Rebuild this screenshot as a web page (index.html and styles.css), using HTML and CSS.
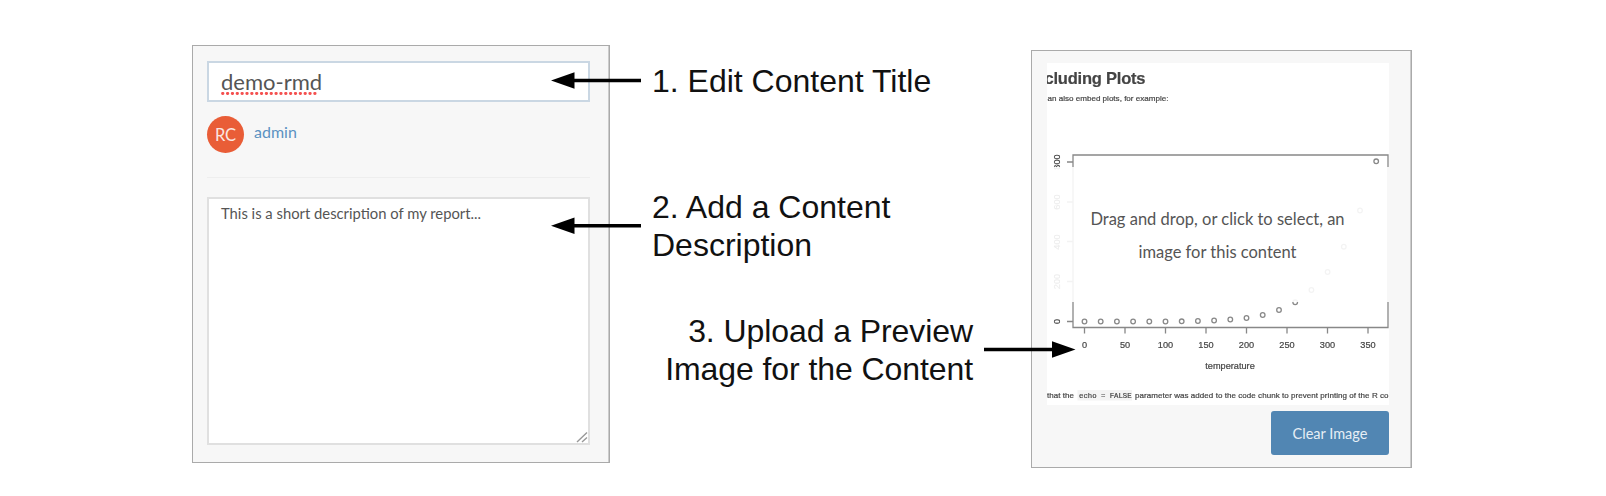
FILE: index.html
```
<!DOCTYPE html>
<html lang="en">
<head>
<meta charset="utf-8">
<title>Content settings</title>
<link rel="stylesheet" href="styles.css">
</head>
<body>
<main class="figure">
  <section class="panel panel-info">
    <div class="title-field"><span class="title-text">demo-rmd</span>
      <svg class="squiggle" width="99" height="3" viewBox="0 0 99 3"><path d="M1.5 1.5H98" stroke="#f4504f" stroke-width="2.8" stroke-linecap="round" stroke-dasharray="0.5 4.35"/></svg>
    </div>
    <div class="owner"><span class="avatar">RC</span><a class="owner-name">admin</a></div>
    <div class="divider"></div>
    <div class="description">This is a short description of my report...
      <svg class="grip" width="12" height="12" viewBox="0 0 12 12"><path d="M1 11L11 1.500M6 11L11 6.500" stroke="#999" stroke-width="1.400" fill="none"/></svg>
    </div>
  </section>

  <section class="labels">
    <p class="label label-one">1. Edit Content Title</p>
    <p class="label label-two">2. Add a Content<br>Description</p>
    <p class="label label-three">3. Upload a Preview<br>Image for the Content</p>
  </section>

  <section class="panel panel-image">
    <div class="preview">
      <svg class="plot" width="342" height="342" viewBox="1047 63 342 342">
        <g class="ink">
          <text x="1145.500" y="83.700" font-size="16.500" font-weight="bold" text-anchor="end" textLength="101">cluding Plots</text>
          <text x="1168.500" y="101.300" font-size="8.070" text-anchor="end">an also embed plots, for example:</text>
          <g font-size="9.200" text-anchor="middle">
            <text x="1084.500" y="347.500">0</text><text x="1125" y="347.500">50</text><text x="1165.500" y="347.500">100</text><text x="1206" y="347.500">150</text><text x="1246.500" y="347.500">200</text><text x="1287" y="347.500">250</text><text x="1327.500" y="347.500">300</text><text x="1368" y="347.500">350</text>
            <text x="1230" y="369.200">temperature</text>
            <text transform="translate(1060 162) rotate(-90)">800</text>
            <text transform="translate(1060 202) rotate(-90)">600</text>
            <text transform="translate(1060 242) rotate(-90)">400</text>
            <text transform="translate(1060 281.500) rotate(-90)">200</text>
            <text transform="translate(1060 321.500) rotate(-90)">0</text>
          </g>
          <text x="1047" y="398" font-size="8" textLength="27">that the</text>
          <rect class="code-box" x="1077.500" y="390" width="54.500" height="10.500"/>
          <text class="code" x="1079" y="398" font-size="7.300">echo = FALSE</text>
          <text x="1135" y="398" font-size="8" textLength="253.500">parameter was added to the code chunk to prevent printing of the R co</text>
        </g>
        <g fill="none" stroke="#888" stroke-width="1.300">
          <path d="M1073 155V327.500H1388V155Z"/>
          <path d="M1067 162h6M1067 202h6M1067 241.500h6M1067 281.500h6M1067 321.500h6M1084.500 327.500v6M1125 327.500v6M1165.500 327.500v6M1206 327.500v6M1246.500 327.500v6M1287 327.500v6M1327.500 327.500v6M1368 327.500v6"/>
          <circle cx="1084.500" cy="321.500" r="2.300"/><circle cx="1100.700" cy="321.500" r="2.300"/><circle cx="1116.900" cy="321.500" r="2.300"/><circle cx="1133.100" cy="321.500" r="2.300"/><circle cx="1149.300" cy="321.500" r="2.300"/><circle cx="1165.500" cy="321.500" r="2.300"/><circle cx="1181.700" cy="321.300" r="2.300"/><circle cx="1197.900" cy="321" r="2.300"/><circle cx="1214.100" cy="320.500" r="2.300"/><circle cx="1230.300" cy="319.500" r="2.300"/><circle cx="1246.500" cy="318" r="2.300"/><circle cx="1262.700" cy="315" r="2.300"/><circle cx="1279" cy="310" r="2.300"/><circle cx="1295.200" cy="302.300" r="2.300"/><circle cx="1311.400" cy="290" r="2.300"/><circle cx="1327.600" cy="272" r="2.300"/><circle cx="1343.800" cy="246.700" r="2.300"/><circle cx="1360" cy="210.500" r="2.300"/><circle cx="1376.200" cy="161.300" r="2.300"/>
        </g>
      </svg>
      <div class="drop-hint">Drag and drop, or click to select, an<br>image for this content</div>
    </div>
    <button class="clear">Clear Image</button>
  </section>

  <svg class="arrows" width="1606" height="496" viewBox="0 0 1606 496">
    <path d="M641 80.500H573M641 225.700H573M984 349.500H1053" stroke="#000" stroke-width="3.400"/>
    <path d="M551 80.500L574.500 72.200V88.800ZM551 225.700L574.500 217.400V234ZM1075.500 349.500L1052 341.200V357.800Z"/>
  </svg>
</main>
</body>
</html>
```
FILE: styles.css
```
* { box-sizing: border-box; }
body { margin: 0; background: #fff; font-family: Lato, sans-serif; color: #555; }
.figure {
  position: relative;
  display: grid;
  grid-template-columns: 418px 1fr 381px;
  width: 1606px;
  height: 496px;
  padding: 45px 194px 0 192px;
  align-items: start;
}
.panel { background: #f7f7f7; border: 1px solid #aaa; box-shadow: inset -1px 0 #ccc; }
.panel-info { height: 418px; padding: 15px 19px 0 14px; }
.title-field {
  position: relative;
  height: 41px;
  padding-left: 12px;
  border: 2px solid #cad7e3;
  background: #fff;
  font-size: 22px;
  line-height: 37px;
}
.squiggle { position: absolute; left: 12px; bottom: 5px; }
.owner { display: flex; gap: 10px; margin-top: 14px; height: 38px; align-items: flex-start; }
.avatar {
  width: 37px;
  height: 37px;
  border-radius: 50%;
  background: #e95d37;
  color: #fbe6e0;
  font-size: 16.5px;
  line-height: 38px;
  text-align: center;
}
.owner-name { color: #5b92c2; font-size: 16px; line-height: 31px; }
.divider { height: 1px; margin-top: 23px; background: #eee; }
.description {
  position: relative;
  height: 248px;
  margin-top: 19px;
  padding: 2px 12px;
  border: 2px solid #e0e0e0;
  background: #fff;
  font-size: 14.8px;
  line-height: 24px;
}
.grip { position: absolute; right: 0; bottom: 0; }

.labels { display: flex; flex-direction: column; font-family: "Liberation Sans", Arial, sans-serif; color: #111; font-size: 32px; line-height: 38px; }
.label { margin: 0; white-space: nowrap; }
.label-one { padding: 17px 0 0 42px; }
.label-two { padding: 88px 0 0 42px; }
.label-three { padding: 48px 58px 0 0; text-align: right; letter-spacing: -0.08px; }

.panel-image { height: 418px; margin-top: 5px; padding: 12px 22px 0 15px; display: flex; flex-direction: column; align-items: flex-end; }
.preview { position: relative; width: 342px; height: 342px; background: #fff; }
.plot { display: block; overflow: hidden; filter: blur(0.45px); }
.ink { font-family: "Liberation Sans", Arial, sans-serif; fill: #444; stroke: #444; stroke-width: 0.2px; }
.code { font-family: "Liberation Mono", monospace; }
.code-box { fill: #f4f4f4; stroke: none; }
.drop-hint {
  position: absolute;
  left: 0;
  top: 104px;
  width: 342px;
  height: 135px;
  padding: 36px 1px 0 0;
  background: rgba(255, 255, 255, 0.9);
  text-align: center;
  white-space: nowrap;
  font-size: 16.5px;
  line-height: 33px;
}
.clear {
  width: 118px;
  height: 44px;
  margin-top: 6px;
  padding: 1px 0 0;
  border: 0;
  border-radius: 3px;
  background: #5186b3;
  color: #e6eef5;
  font: 14.5px/43px Lato, sans-serif;
}
.arrows { position: absolute; left: 0; top: 0; pointer-events: none; }
```
